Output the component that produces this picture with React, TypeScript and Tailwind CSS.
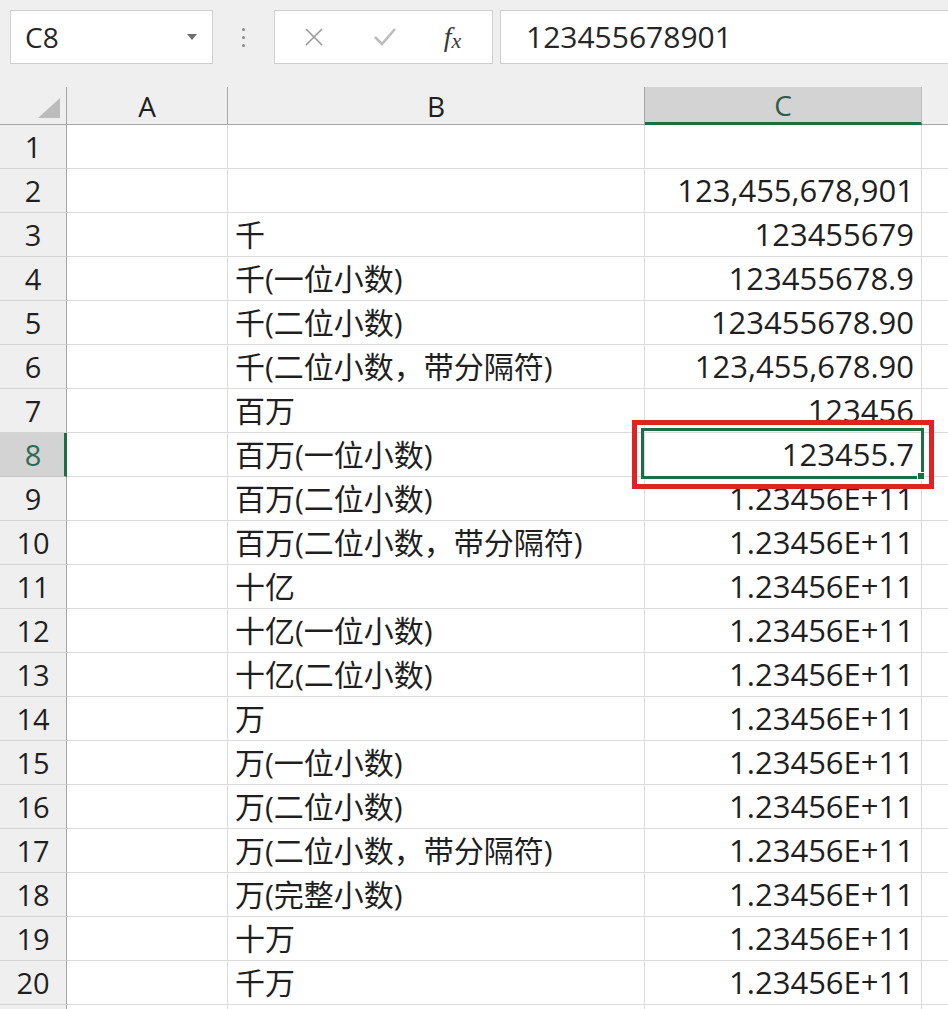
import React from "react";

const rows: [string, string][] = [
  ["", ""],
  ["", "123,455,678,901"],
  ["千", "123455679"],
  ["千(一位小数)", "123455678.9"],
  ["千(二位小数)", "123455678.90"],
  ["千(二位小数，带分隔符)", "123,455,678.90"],
  ["百万", "123456"],
  ["百万(一位小数)", "123455.7"],
  ["百万(二位小数)", "1.23456E+11"],
  ["百万(二位小数，带分隔符)", "1.23456E+11"],
  ["十亿", "1.23456E+11"],
  ["十亿(一位小数)", "1.23456E+11"],
  ["十亿(二位小数)", "1.23456E+11"],
  ["万", "1.23456E+11"],
  ["万(一位小数)", "1.23456E+11"],
  ["万(二位小数)", "1.23456E+11"],
  ["万(二位小数，带分隔符)", "1.23456E+11"],
  ["万(完整小数)", "1.23456E+11"],
  ["十万", "1.23456E+11"],
  ["千万", "1.23456E+11"],
];

const font = { fontFamily: '"Open Sans", "Noto Sans CJK SC", sans-serif' };

export default function App() {
  return (
    <div
      className="w-[948px] h-[1009px] overflow-hidden bg-white text-[#1f1f1f]"
      style={font}
    >
      {/* Top bar */}
      <div className="h-[87px] bg-[#efefef] flex items-start pt-[10px]">
        <div className="ml-[10px] w-[203px] h-[54px] bg-white border border-[#cfcfcf] flex items-center pl-[14px] pr-[14px] justify-between">
          <span className="text-[28px] leading-none text-[#262626]">C8</span>
          <svg width="12" height="8" viewBox="0 0 12 8">
            <path d="M1 1 L11 1 L6 7 Z" fill="#6e6e6e" />
          </svg>
        </div>
        <div className="w-[61px] h-[54px] flex flex-col items-center justify-center gap-[5px]">
          <div className="w-[3px] h-[3px] rounded-full bg-[#8a8a8a]" />
          <div className="w-[3px] h-[3px] rounded-full bg-[#8a8a8a]" />
          <div className="w-[3px] h-[3px] rounded-full bg-[#8a8a8a]" />
        </div>
        <div className="w-[219px] h-[54px] bg-white border border-[#cfcfcf] flex items-center">
          <div className="w-[76px] flex justify-center pl-[2px]">
            <svg width="22" height="22" viewBox="0 0 22 22">
              <path d="M3 3 L19 19 M19 3 L3 19" stroke="#9a9a9a" strokeWidth="1.6" fill="none" />
            </svg>
          </div>
          <div className="w-[68px] flex justify-center">
            <svg width="26" height="22" viewBox="0 0 26 22">
              <path d="M3 11 L10 18 L23 3" stroke="#bdbdbd" strokeWidth="2.6" fill="none" />
            </svg>
          </div>
          <div className="flex-1 flex justify-center pr-[6px]">
            <span
              className="italic text-[28px] leading-none text-[#3a3a3a]"
              style={{ fontFamily: '"Liberation Serif", serif' }}
            >
              f<span className="text-[22px] relative top-[2px]">x</span>
            </span>
          </div>
        </div>
        <div className="ml-[7px] flex-1 h-[54px] bg-white border border-[#cfcfcf] border-r-0 flex items-center pl-[25px]">
          <span className="text-[30px] leading-none text-[#262626]">123455678901</span>
        </div>
      </div>

      {/* Grid */}
      <div className="relative">
        {/* Header row */}
        <div className="flex h-[38px] bg-[#efefef]">
          <div className="w-[67px] h-full border-r border-b border-[#a6a6a6] flex items-end justify-end pr-[6px] pb-[6px]">
            <svg width="22" height="20" viewBox="0 0 22 20">
              <path d="M22 0 L22 20 L0 20 Z" fill="#bcbcbc" />
            </svg>
          </div>
          <div className="w-[161px] h-full border-r border-b border-[#a6a6a6] flex items-center justify-center text-[28px] text-[#1f1f1f]">
            A
          </div>
          <div className="w-[417px] h-full border-r border-b border-[#a6a6a6] flex items-center justify-center text-[28px] text-[#1f1f1f]">
            B
          </div>
          <div className="w-[277px] h-full border-r border-[#bdbdbd] bg-[#d3d3d3] border-b-[3px] border-b-[#1e6e43] flex items-center justify-center text-[28px] text-[#2d5c48]">
            C
          </div>
          <div className="flex-1 h-full border-b border-[#a6a6a6]" />
        </div>

        {rows.map(([b, c], i) => {
          const sel = i === 7;
          return (
            <div key={i} className="flex h-[44px]">
              <div
                className={
                  sel
                    ? "w-[67px] h-full bg-[#d3d3d3] border-b border-[#c8c8c8] border-r-[3px] border-r-[#1e6e43] flex items-center justify-center text-[29px] text-[#2d6a55] pl-[2px]"
                    : "w-[67px] h-full bg-[#efefef] border-b border-[#d4d4d4] border-r border-r-[#a6a6a6] flex items-center justify-center text-[29px] text-[#1f1f1f]"
                }
              >
                {i + 1}
              </div>
              <div className="w-[161px] h-full border-r border-b border-[#dadada]" />
              <div className="w-[417px] h-full border-r border-b border-[#dadada] flex items-center pl-[7px] text-[30px] whitespace-nowrap">
                {b}
              </div>
              <div className="w-[277px] h-full border-r border-b border-[#dadada] flex items-center justify-end pr-[7px] text-[31px] whitespace-nowrap">
                {c}
              </div>
              <div className="flex-1 h-full border-b border-[#dadada]" />
            </div>
          );
        })}
        <div className="flex h-[10px]">
          <div className="w-[67px] h-full bg-[#efefef] border-r border-[#a6a6a6]" />
          <div className="w-[161px] h-full border-r border-[#dadada]" />
          <div className="w-[417px] h-full border-r border-[#dadada]" />
          <div className="w-[277px] h-full border-r border-[#dadada]" />
        </div>

        {/* Selection overlay for C8 */}
        <div className="absolute left-[641px] top-[341px] w-[283px] h-[51px] border-[3px] border-[#1e6e43]" />
        <div className="absolute left-[917px] top-[385px] w-[8px] h-[8px] bg-[#1e6e43] border border-white" />
        {/* Red highlight box */}
        <div className="absolute left-[632px] top-[333px] w-[302px] h-[69px] border-[5px] border-[#e02225]" />
      </div>
    </div>
  );
}
